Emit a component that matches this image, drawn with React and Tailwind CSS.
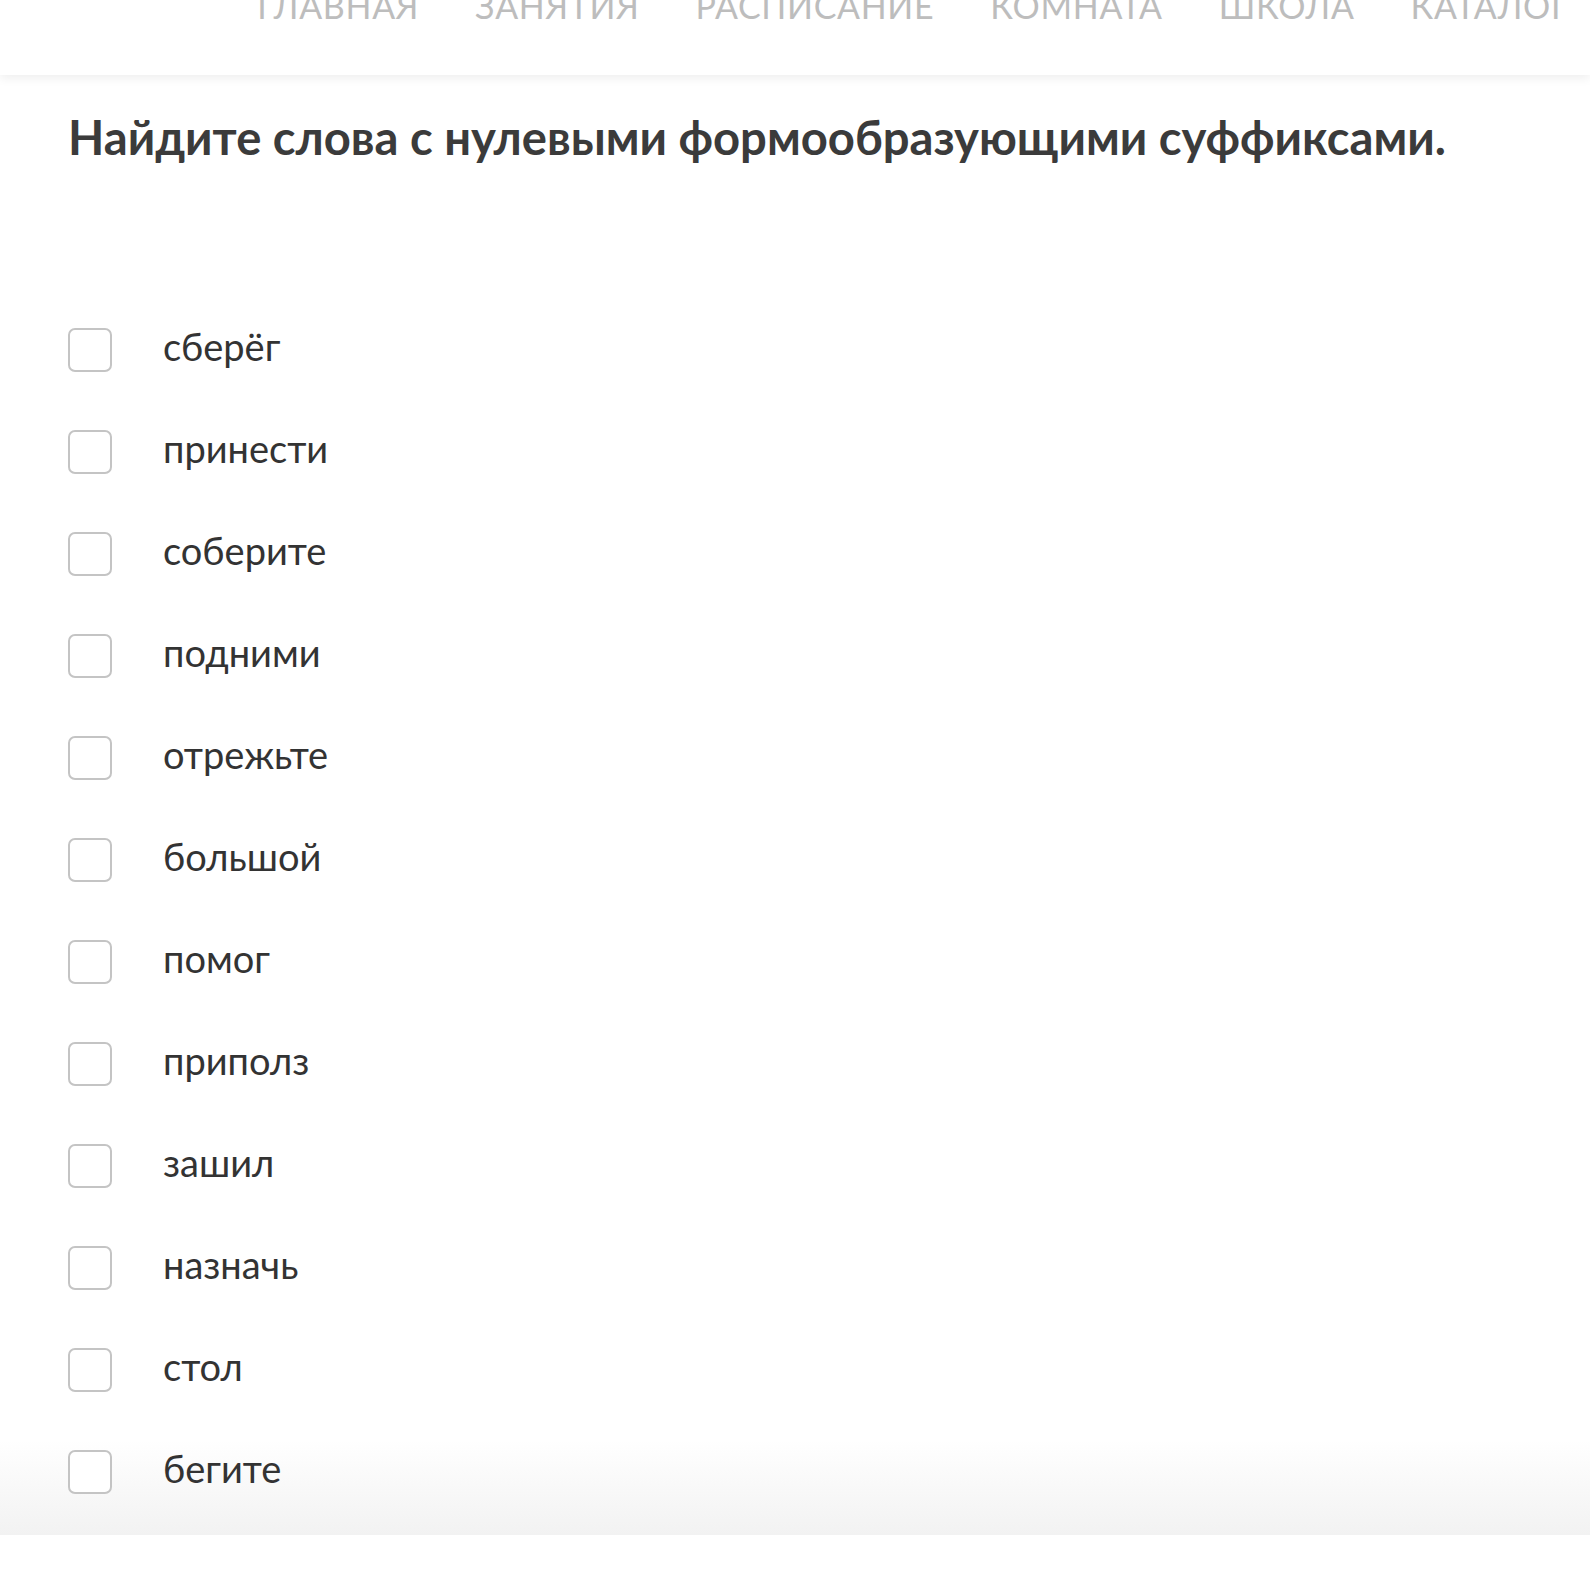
const NAV = ['ГЛАВНАЯ', 'ЗАНЯТИЯ', 'РАСПИСАНИЕ', 'КОМНАТА', 'ШКОЛА', 'КАТАЛОГ']

const WORDS = [
  'сберёг',
  'принести',
  'соберите',
  'подними',
  'отрежьте',
  'большой',
  'помог',
  'приполз',
  'зашил',
  'назначь',
  'стол',
  'бегите',
]

function Checkbox() {
  return (
    <span className="block w-11 h-11 shrink-0 rounded-[7px] border-2 border-[#c4c4c4] bg-white" />
  )
}

export default function App() {
  return (
    <div className="w-[1590px] min-h-[1577px] bg-white" style={{ fontFamily: 'Lato, "Open Sans", sans-serif' }}>
      <header className="relative z-10 h-[75px] overflow-hidden bg-white shadow-[0_3px_10px_rgba(0,0,0,0.07)]">
        <nav className="flex justify-end gap-[56px] pr-[20px] -mt-[11px]">
          {NAV.map((item) => (
            <span key={item} className="text-[34px] leading-none tracking-[0.02em] text-[#bdbdbd]">
              {item}
            </span>
          ))}
        </nav>
      </header>

      <main className="h-[1460px] pl-[68px] bg-[linear-gradient(to_bottom,#ffffff_calc(100%-95px),#f2f2f2)]">
        <h1 className="pt-[32px] text-[47.2px] leading-[60px] font-bold text-[#3b3b3b]">
          Найдите слова с нулевыми формообразующими суффиксами.
        </h1>

        <ul className="mt-[132px]">
          {WORDS.map((word) => (
            <li key={word} className="flex items-center h-[102px] gap-[51px]">
              <Checkbox />
              <span className="pb-[8px] text-[38px] leading-none text-[#333333]">{word}</span>
            </li>
          ))}
        </ul>
      </main>
    </div>
  )
}
